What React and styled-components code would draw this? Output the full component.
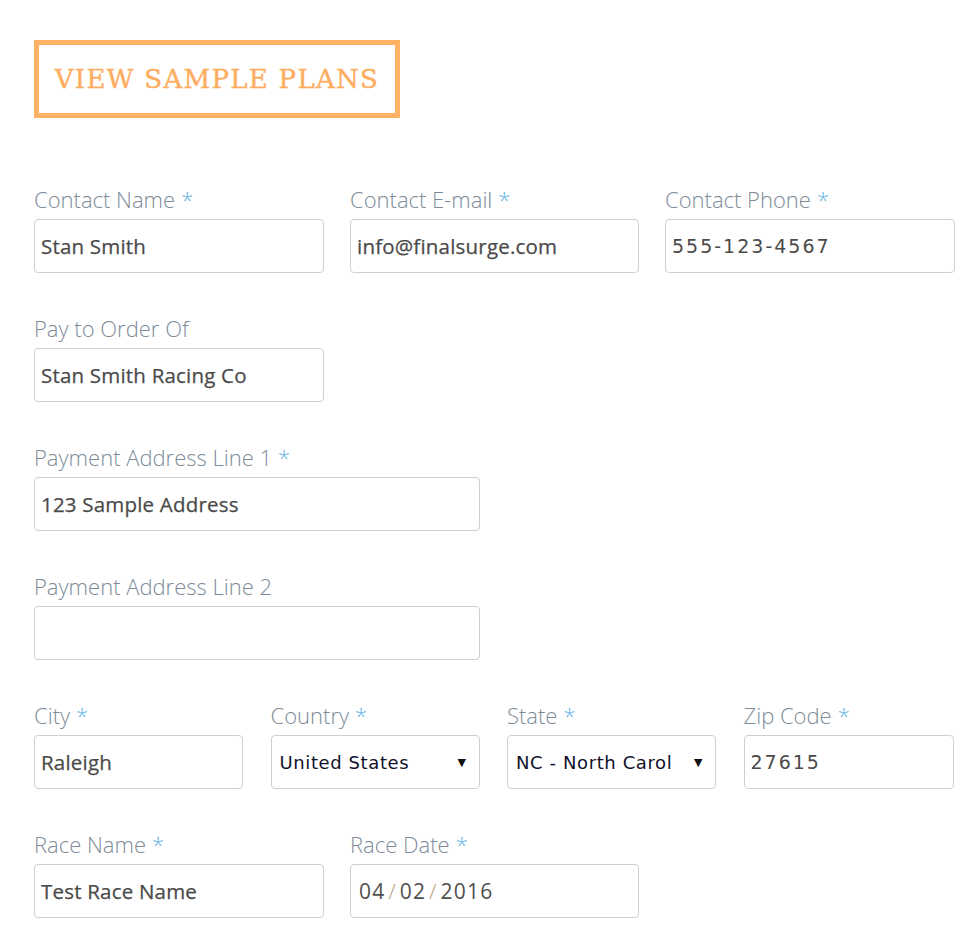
import React from 'react';
import styled, { createGlobalStyle } from 'styled-components';

const GlobalStyle = createGlobalStyle`
  body {
    margin: 0;
    background: #fff;
    font-family: "Open Sans", "Liberation Sans", sans-serif;
  }
`;

const Page = styled.div`
  padding: 40px 26px 20px 34px;
  width: 920px;
`;

const PlansButton = styled.button`
  display: inline-flex;
  align-items: center;
  justify-content: center;
  width: 366px;
  height: 78px;
  border: 5px solid #fdb264;
  background: #fff;
  color: #fdad60;
  font-family: "DejaVu Serif", "Liberation Serif", serif;
  font-size: 26px;
  letter-spacing: 1.3px;
  -webkit-text-stroke: 0.4px #fdad60;
  cursor: pointer;
  margin-bottom: 69px;
`;

const Form = styled.div`
  display: flex;
  flex-direction: column;
  gap: 43px;
`;

const Row = styled.div`
  display: grid;
  grid-template-columns: ${({ cols }) => cols};
  column-gap: ${({ gap }) => gap || '26px'};
`;

const Field = styled.div`
  display: flex;
  flex-direction: column;
`;

const Label = styled.label`
  font-family: "Open Sans", sans-serif;
  font-weight: 300;
  font-size: 22px;
  line-height: 24px;
  color: #7d8b98;
  margin-bottom: 8px;
  white-space: nowrap;
`;

const Req = styled.span`
  color: #5fb3e6;
  margin-left: 6px;
`;

const Input = styled.input`
  box-sizing: border-box;
  height: 54px;
  width: 100%;
  border: 1px solid #cfcfcf;
  border-radius: 4px;
  padding: 0 6px;
  font-family: ${({ mono }) => (mono ? '"DejaVu Sans", sans-serif' : '"Open Sans", sans-serif')};
  font-weight: ${({ mono }) => (mono ? 400 : 500)};
  font-size: ${({ mono }) => (mono ? '19px' : '20.5px')};
  letter-spacing: ${({ mono }) => (mono ? '2px' : '0.2px')};
  color: #4a4a4a;
  -webkit-text-stroke: ${({ mono }) => (mono ? '0' : '0.25px #4a4a4a')};
  background: #fff;
  outline: none;
`;

const SelectBox = styled.div`
  box-sizing: border-box;
  height: 54px;
  border: 1px solid #cfcfcf;
  border-radius: 4px;
  padding: 0 12px 0 8px;
  display: flex;
  align-items: center;
  justify-content: space-between;
  font-family: "DejaVu Sans", "Liberation Sans", sans-serif;
  font-size: 18px;
  letter-spacing: 0.6px;
  color: #10122a;
  white-space: nowrap;
  overflow: hidden;
`;

const Arrow = styled.span`
  font-size: 11px;
  color: #111;
  margin-left: 6px;
`;

const DateBox = styled.div`
  box-sizing: border-box;
  height: 54px;
  border: 1px solid #cfcfcf;
  border-radius: 4px;
  padding: 0 8px;
  display: flex;
  align-items: center;
  font-family: "Open Sans", sans-serif;
  font-size: 21px;
  color: #4f4f4f;
  letter-spacing: 1.2px;
`;

const Slash = styled.span`
  color: #b59a7a;
  margin: 0 3px;
  font-weight: 300;
`;

const TextField = ({ label, required, value, mono }) => (
  <Field>
    <Label>
      {label}
      {required && <Req>*</Req>}
    </Label>
    <Input readOnly defaultValue={value} mono={mono} />
  </Field>
);

const SelectField = ({ label, value }) => (
  <Field>
    <Label>
      {label}
      <Req>*</Req>
    </Label>
    <SelectBox>
      <span>{value}</span>
      <Arrow>▼</Arrow>
    </SelectBox>
  </Field>
);

export default function App() {
  return (
    <Page>
      <GlobalStyle />
      <PlansButton>VIEW SAMPLE PLANS</PlansButton>
      <Form>
        <Row cols="290px 289px 290px">
          <TextField label="Contact Name" required value="Stan Smith" />
          <TextField label="Contact E-mail" required value="info@finalsurge.com" />
          <TextField label="Contact Phone" required value="555-123-4567" mono />
        </Row>
        <Row cols="290px">
          <TextField label="Pay to Order Of" value="Stan Smith Racing Co" />
        </Row>
        <Row cols="446px">
          <TextField label="Payment Address Line 1" required value="123 Sample Address" />
        </Row>
        <Row cols="446px">
          <TextField label="Payment Address Line 2" value="" />
        </Row>
        <Row cols="209px 209px 209px 210px" gap="27.5px">
          <TextField label="City" required value="Raleigh" />
          <SelectField label="Country" value="United States" />
          <SelectField label="State" value="NC - North Carol" />
          <TextField label="Zip Code" required value="27615" mono />
        </Row>
        <Row cols="290px 289px">
          <TextField label="Race Name" required value="Test Race Name" />
          <Field>
            <Label>
              Race Date
              <Req>*</Req>
            </Label>
            <DateBox>
              04<Slash>/</Slash>02<Slash>/</Slash>2016
            </DateBox>
          </Field>
        </Row>
      </Form>
    </Page>
  );
}
